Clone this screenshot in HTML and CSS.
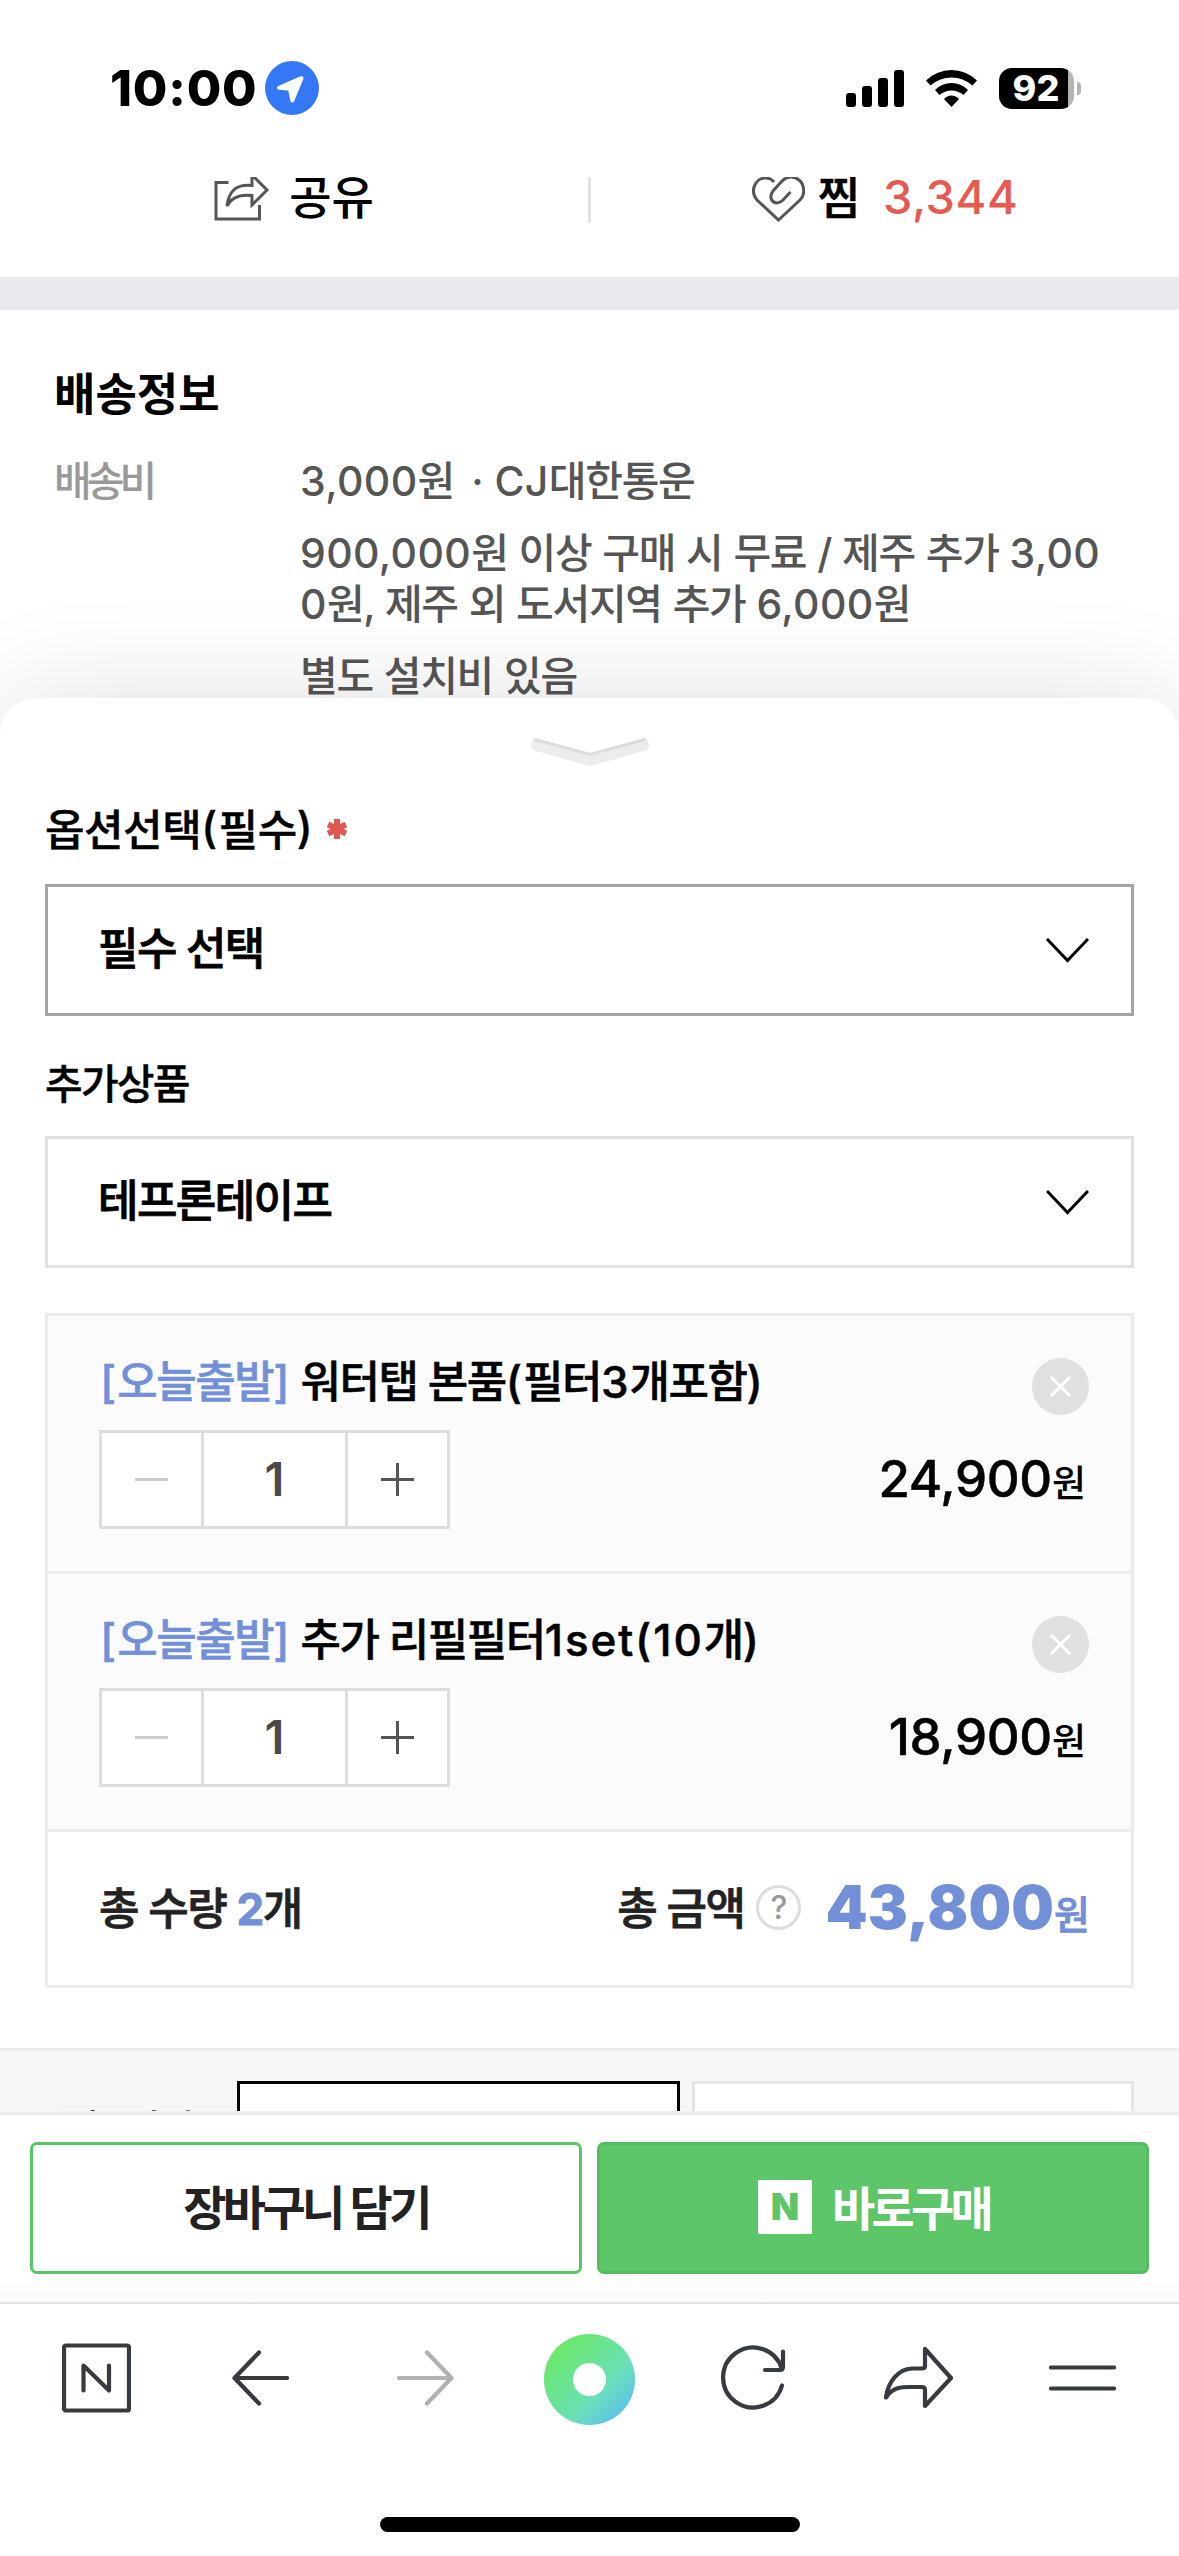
FILE: index.html
```html
<!DOCTYPE html>
<html lang="ko">
<head>
  <meta charset="utf-8">
  <title>상품 옵션 선택</title>
  <link rel="stylesheet" href="styles.css">
</head>
<body>
  <div class="page">
    <header class="status">
      <span class="clock">10:00</span>
      <svg class="location" width="54" height="54" viewBox="0 0 54 54">
        <circle cx="27" cy="27" r="27" fill="#3478f6"/>
        <path d="M36.500 17.200 27.300 39.500 25 27.800 14 26.800Z" fill="#fff" stroke="#fff" stroke-width="4" stroke-linejoin="round"/>
      </svg>
      <div class="indicators">
        <svg width="58" height="37" viewBox="0 0 58 37">
          <rect x="0" y="23" width="10" height="14" rx="3"/>
          <rect x="16" y="16" width="10" height="21" rx="3"/>
          <rect x="32" y="8" width="10" height="29" rx="3"/>
          <rect x="48" y="0" width="10" height="37" rx="3"/>
        </svg>
        <svg width="51" height="37" viewBox="0 0 51 37">
          <path d="M0 10.500Q11 0 25.500 0T51 10.500L46.500 15.500Q37 7.500 25.500 7.500T4.500 15.500Z"/>
          <path d="M9 20Q16 13 25.500 13T42 20L37.500 25Q32 20.500 25.500 20.500T13.500 25Z"/>
          <path d="M18 29Q21 25.500 25.500 25.500T33 29L25.500 37Z"/>
        </svg>
        <div class="battery">92</div>
      </div>
    </header>

    <div class="actions">
      <div class="action">
        <svg class="share" width="56" height="50" viewBox="0 0 56 50">
          <path d="M14.500 10.500H2V47H45.500V33"/>
          <path d="M38 3V13.500C24 12 15 17 13 34 17 26 24 22 38 23.500V33L53 18Z"/>
        </svg>
        <span>공유</span>
      </div>
      <div class="divider"></div>
      <div class="action">
        <svg class="heart" width="53" height="50" viewBox="0 0 53 50">
          <path d="M22 10C17 4 8 5 4 11 0 17 1 23 5 28L26.500 48 48 28C54 22 52 12 47 8 42 4 35 4 30 9L21 19C17 24 19 30 24 31 27 31 29 30 31 28L38.500 20"/>
        </svg>
        <span class="zzim">찜</span>
        <span class="count">3,344</span>
      </div>
    </div>

    <section class="delivery">
      <h2>배송정보</h2>
      <dl>
        <dt>배송비</dt>
        <dd>
          <p class="carrier"><i>3,000</i>원 &nbsp;<i>· CJ</i>대한통운</p>
          <p><i>900,000</i>원 이상 구매 시 무료 / 제주 추가 <i>3,00</i><br><i>0</i>원, 제주 외 도서지역 추가 <i>6,000</i>원</p>
          <p>별도 설치비 있음</p>
        </dd>
      </dl>
    </section>

    <main class="sheet">
      <svg class="handle" width="118" height="31" viewBox="0 0 118 31">
        <path d="M6 8 59 23 112 8" stroke="#ececec" stroke-width="12"/>
        <path d="M4 2.500 59 17.500 114 2.500" stroke="#dcdcdc" stroke-width="3"/>
      </svg>

      <h3 class="label label-main">옵션선택<i>(</i>필수<i>)</i>
        <svg class="required" width="20" height="20" viewBox="0 0 20 20">
          <path d="M10 0V20M1 5.500 19 14.500M19 5.500 1 14.500"/>
        </svg>
      </h3>
      <div class="select active">
        <span>필수 선택</span>
        <svg width="43" height="25" viewBox="0 0 43 25"><path d="M1 1 21.500 22.500 42 1"/></svg>
      </div>
      <h3 class="label label-extra">추가상품</h3>
      <div class="select">
        <span>테프론테이프</span>
        <svg width="43" height="25" viewBox="0 0 43 25"><path d="M1 1 21.500 22.500 42 1"/></svg>
      </div>

      <div class="cart">
        <div class="item">
          <div class="item-head">
            <div class="name"><em><i>[</i>오늘출발<i>]</i></em> 워터탭 본품<i>(</i>필터<i>3</i>개포함<i>)</i></div>
            <svg class="remove" width="57" height="57" viewBox="0 0 57 57"><circle cx="28.500" cy="28.500" r="28.500"/><path d="M19 19 38 38M38 19 19 38"/></svg>
          </div>
          <div class="item-foot">
            <div class="stepper">
              <svg class="minus" viewBox="0 0 33 33" width="33" height="33"><path d="M0 16.500H33"/></svg>
              <b>1</b>
              <svg viewBox="0 0 33 33" width="33" height="33"><path d="M0 16.500H33M16.500 0V33"/></svg>
            </div>
            <div class="price">24,900<small>원</small></div>
          </div>
        </div>
        <div class="item">
          <div class="item-head">
            <div class="name"><em><i>[</i>오늘출발<i>]</i></em> 추가 리필필터<i class="wide">1set(10</i>개<i>)</i></div>
            <svg class="remove" width="57" height="57" viewBox="0 0 57 57"><circle cx="28.500" cy="28.500" r="28.500"/><path d="M19 19 38 38M38 19 19 38"/></svg>
          </div>
          <div class="item-foot">
            <div class="stepper">
              <svg class="minus" viewBox="0 0 33 33" width="33" height="33"><path d="M0 16.500H33"/></svg>
              <b>1</b>
              <svg viewBox="0 0 33 33" width="33" height="33"><path d="M0 16.500H33M16.500 0V33"/></svg>
            </div>
            <div class="price">18,900<small>원</small></div>
          </div>
        </div>
        <div class="total">
          <div class="qty">총 수량 <em>2</em>개</div>
          <div class="sum-label">총 금액</div>
          <div class="help">?</div>
          <div class="sum">43,800<small>원</small></div>
        </div>
      </div>

      <div class="method">
        <span class="method-label">배송방법</span>
        <div class="method-box on"></div>
        <div class="method-box"></div>
      </div>
    </main>

    <div class="buy">
      <button class="basket">장바구니 담기</button>
      <button class="order"><span class="n">N</span><span>바로구매</span></button>
    </div>

    <nav class="toolbar">
      <svg width="69" height="69" viewBox="0 0 69 69">
        <rect x="2" y="2" width="65" height="65" rx="2"/>
        <path d="M21.500 47V22L47 47V22"/>
      </svg>
      <svg width="57" height="55" viewBox="0 0 57 55"><path d="M27 2 2.500 27.500 27 53M3 27.500H55"/></svg>
      <svg class="off" width="57" height="55" viewBox="0 0 57 55"><path d="M30 2 54.500 27.500 30 53M54 27.500H2"/></svg>
      <div class="green-dot"></div>
      <svg width="65" height="65" viewBox="0 0 65 65">
        <path d="M61 40A30 30 0 1 1 61 24M62 6V21Q62 24.500 59 24.500H44"/>
      </svg>
      <svg width="69" height="62" viewBox="0 0 69 62">
        <path d="M41 2V19Q41 21.500 38 21.500H28C14 22 4 35 2 50.500 9 40 18 40 26 40H38Q41 40 41 43V59L67 31Z"/>
      </svg>
      <svg width="67" height="26" viewBox="0 0 67 26"><path d="M2 2.500H65M2 23.500H65"/></svg>
    </nav>
    <div class="home"></div>
  </div>
</body>
</html>
```

FILE: styles.css
```css
* { box-sizing: border-box; margin: 0; padding: 0; }
body { font-family: Inter, "Noto Sans CJK KR", sans-serif; background: #fff; color: #000; }
em, i { font-style: normal; }
svg { display: block; flex: none; }

.page { width: 1179px; height: 2556px; overflow: hidden; display: flex; flex-direction: column; }
.page > * { flex: none; }

/* status bar */
.status { height: 177px; padding: 61px 105px 0 110px; display: flex; align-items: flex-start; }
.clock { width: 155px; font-size: 50px; line-height: 54px; font-weight: 800; letter-spacing: 0.800px; white-space: nowrap; }
.indicators { margin-left: auto; height: 54px; display: flex; align-items: center; gap: 22px; }
.battery { position: relative; width: 75px; height: 41px; border-radius: 13px; background: linear-gradient(90deg, #000 69px, #b4b4b4 69px); color: #fff; font-size: 36px; line-height: 41px; font-weight: 800; text-align: center; padding-right: 1px; }
.battery::after { content: ""; position: absolute; left: 78px; top: 14px; width: 4px; height: 13px; border-radius: 0 5px 5px 0; background: #b4b4b4; }

/* share / like row, cut by the status bar */
.actions { height: 100px; display: flex; overflow: hidden; }
.action { flex: 1; height: 40px; display: flex; align-items: center; justify-content: center; font-size: 46px; line-height: 40px; font-weight: 500; }
.action svg { fill: none; stroke: #555; stroke-width: 3; }
.share { margin-right: 19px; }
.heart { margin-right: 13px; }
.zzim { margin-right: 23px; -webkit-text-stroke: 0.5px; }
.count { color: #e45b52; font-size: 47px; letter-spacing: 0.5px; }
.divider { width: 3px; height: 46px; background: #e2e2e2; }

.delivery { height: 421px; border-top: 33px solid #e8eaee; padding: 57px 54px 0; }
.delivery h2 { font-size: 45px; line-height: 56px; font-weight: 700; letter-spacing: 0; }
.delivery dl { display: flex; margin-top: 33px; }
.delivery dt { width: 246px; font-size: 41px; line-height: 51px; font-weight: 500; letter-spacing: -5px; color: #999; }
.delivery dd { font-size: 41px; line-height: 51px; font-weight: 500; letter-spacing: -1.300px; word-spacing: 1.300px; color: #555; white-space: nowrap; }
.delivery i { letter-spacing: 0.400px; }
.delivery p { margin-bottom: 21px; }
.delivery .carrier { word-spacing: -1px; }

/* option sheet */
.sheet { position: relative; height: 1413px; border-radius: 36px 36px 0 0; background: #fff; box-shadow: 0 0 110px rgba(0,0,0,0.12); padding-top: 39px; display: flex; flex-direction: column; }
.handle { align-self: center; fill: none; stroke-linecap: round; }
.label { margin: 0 45px; display: flex; align-items: center; font-weight: 500; -webkit-text-stroke: 0.4px; }
.label-main { height: 116px; padding-top: 1px; font-size: 43px; letter-spacing: -0.5px; }
.label-main i { letter-spacing: 1.5px; }
.label-extra { height: 120px; padding-top: 10px; font-size: 41px; letter-spacing: -1.800px; }
.required { margin: 5px 0 0 13px; stroke: #e0574f; stroke-width: 6; }
.select { height: 132px; margin: 0 45px; padding: 0 42px 0 50px; border: 3px solid #e1e1e1; display: flex; align-items: center; justify-content: space-between; font-size: 44px; font-weight: 500; letter-spacing: -1.600px; }
.select span { padding-bottom: 8px; -webkit-text-stroke: 0.8px; }
.select.active { border-color: #a4a4a4; }
.select svg { fill: none; stroke: #000; stroke-width: 3; }

.cart { margin: 45px 45px 0; height: 675px; border: 3px solid #ececec; }
.item { height: 258px; border-bottom: 3px solid #ececec; background: #fbfbfb; padding: 42px 42px 0 51px; }
.item-head { height: 57px; display: flex; justify-content: space-between; align-items: center; }
.name { padding: 0 0 9px 1px; font-size: 44px; line-height: 57px; font-weight: 500; letter-spacing: -1.500px; word-spacing: 0; white-space: nowrap; -webkit-text-stroke: 0.5px; }
.name i { letter-spacing: 1px; }
.name .wide { letter-spacing: 1.900px; }
.name em, .total em { color: #728fd8; }
.remove { fill: #e0e0e0; stroke: #fff; stroke-width: 3; }
.remove circle { stroke: none; }
.item-foot { margin-top: 15px; display: flex; align-items: center; justify-content: space-between; }
.stepper { width: 351px; height: 99px; border: 3px solid #ddd; background: #fff; display: grid; grid-template-columns: 99px 147px 99px; align-items: center; justify-items: center; }
.stepper svg { stroke: #555; stroke-width: 3; }
.stepper .minus { stroke: #ccc; }
.stepper b { width: 147px; height: 93px; border: solid #ddd; border-width: 0 3px; text-align: center; font-size: 47px; line-height: 91px; font-weight: 600; color: #4a4a4a; }
.price { padding: 0 3px 2px 0; font-size: 51px; font-weight: 500; letter-spacing: -0.300px; -webkit-text-stroke: 0.5px; }
.price small { font-size: 37px; font-weight: 500; letter-spacing: 0; -webkit-text-stroke: 0; }

.total { height: 153px; padding: 0 42px 2px 51px; display: flex; align-items: center; color: #222; font-size: 44px; font-weight: 500; letter-spacing: -1.500px; }
.qty, .sum-label { padding-bottom: 3px; -webkit-text-stroke: 0.8px; }
.qty { margin-right: auto; }
.qty em { font-weight: 700; }
.help { width: 45px; height: 45px; margin: 0 24px 0 12px; border: 3px solid #ddd; border-radius: 50%; font-size: 32px; line-height: 39px; text-align: center; color: #999; letter-spacing: 0; }
.sum { padding-bottom: 2px; color: #728fd8; font-size: 60px; font-weight: 900; letter-spacing: 0.200px; }
.sum small { font-size: 39px; font-weight: 500; letter-spacing: -1px; -webkit-text-stroke: 0.8px; }

.method { margin-top: 60px; height: 63px; overflow: hidden; border-top: 3px solid #ebebeb; background: #f7f7f7; padding: 30px 45px 0 64px; display: flex; }
.method-label { width: 173px; font-size: 37px; line-height: 52px; font-weight: 500; letter-spacing: -2px; padding-top: 22px; }
.method-box { width: 442px; height: 90px; border: 3px solid #e5e5e5; background: #fff; }
.method-box.on { width: 443px; border-color: #000; margin-right: 12px; }

/* purchase buttons */
.buy { position: relative; height: 190px; margin-top: 1px; border-top: 3px solid #ececec; padding: 27px 30px 0; display: flex; gap: 15px; background: linear-gradient(#fff 167px, #f8f9f9 187px); }
.buy button { width: 552px; height: 132px; border: 3px solid #5bc467; border-radius: 7px; font: inherit; font-size: 47px; font-weight: 600; display: flex; align-items: center; justify-content: center; }
.buy .basket { padding-bottom: 7px; background: #fff; color: #222; letter-spacing: -3.700px; }
.buy .order { background: #5dc669; border-color: #56bb62; color: #fff; letter-spacing: -3.700px; padding: 0 0 6px 2px; }
.n { width: 54px; height: 54px; margin: 4px 20px 0 0; background: #fff; color: #5dc669; font-size: 37px; line-height: 54px; font-weight: 900; letter-spacing: 0; }

/* browser toolbar */
.toolbar { height: 215px; border-top: 2px solid #dfe1e1; padding: 30px 14px 0; display: grid; grid-template-columns: repeat(7, 1fr); justify-items: center; align-items: start; }
.toolbar svg { height: 88px; fill: none; stroke: #373a3f; stroke-width: 4.200; stroke-linecap: round; stroke-linejoin: round; }
.toolbar .off { stroke: #b0b1b1; }
.green-dot { width: 91px; height: 91px; border-radius: 50%; background: radial-gradient(circle, #fff 16px, transparent 17px), linear-gradient(135deg, #6ae868 15%, #6be0b8 62%, #5bbdf0 92%); }
.home { width: 420px; height: 15px; border-radius: 8px; background: #000; align-self: center; }
```
